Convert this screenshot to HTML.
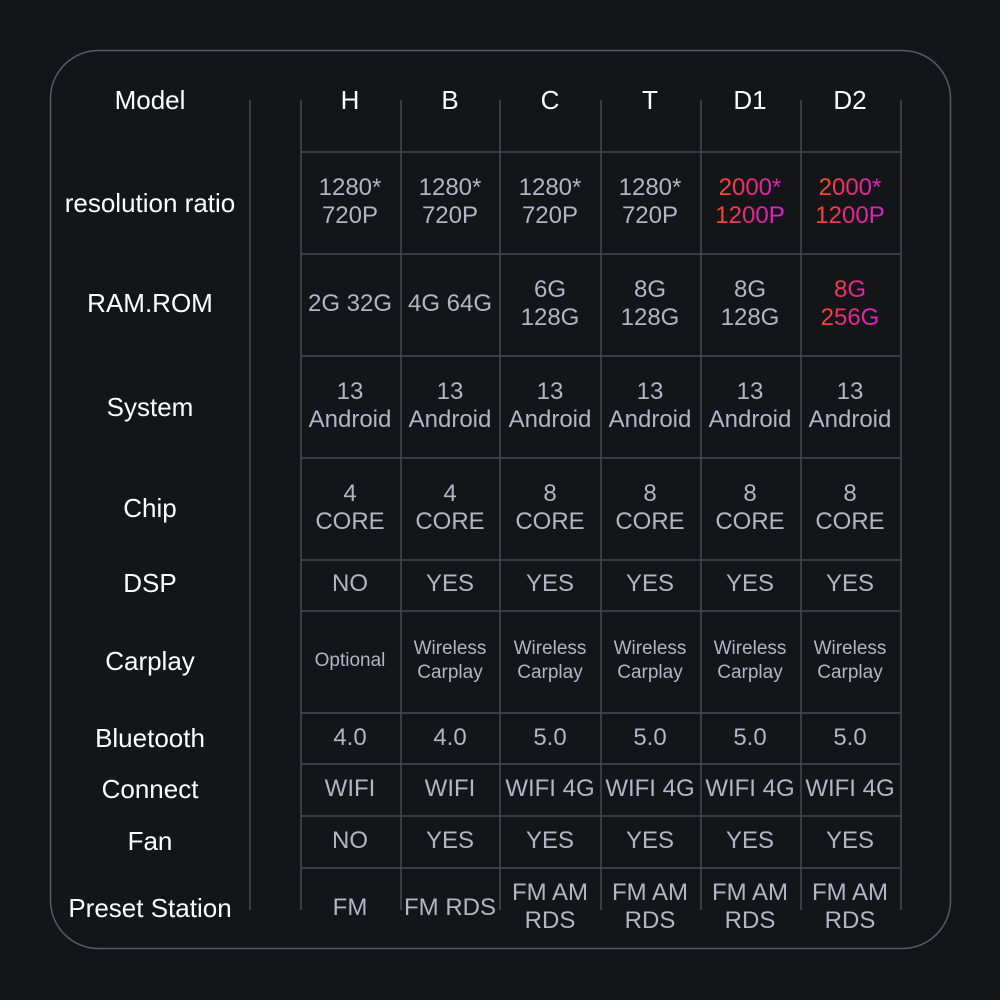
<!DOCTYPE html>
<html><head><meta charset="utf-8"><style>
html,body{margin:0;padding:0;background:#141519;}
#w{position:relative;width:1000px;height:1000px;overflow:hidden;background:#141519;font-family:"Liberation Sans",sans-serif;}
.t{position:absolute;transform:translate(-50%,-50%);text-align:center;white-space:nowrap;color:#b3b4c4;font-size:24px;line-height:28px;}
.h{color:#fff;font-size:26px;}
.s{font-size:19px;line-height:24px;}
.g{background:linear-gradient(100deg,#ff4a25 10%,#e82a80 50%,#dc1fd8 95%);-webkit-background-clip:text;background-clip:text;color:transparent;}
</style></head><body><div id="w">
<svg width="1000" height="1000" style="position:absolute;left:0;top:0">
<rect x="50.5" y="50.5" width="900" height="898" rx="48" fill="none" stroke="#565a68" stroke-width="1.5"/>
<g stroke="#464a58" stroke-width="1.5">
<line x1="250" y1="100" x2="250" y2="910"/>
<line x1="301" y1="100" x2="301" y2="910"/>
<line x1="401" y1="100" x2="401" y2="910"/>
<line x1="500" y1="100" x2="500" y2="910"/>
<line x1="601" y1="100" x2="601" y2="910"/>
<line x1="701" y1="100" x2="701" y2="910"/>
<line x1="801" y1="100" x2="801" y2="910"/>
<line x1="901" y1="100" x2="901" y2="910"/>
<line x1="301" y1="152" x2="901" y2="152"/>
<line x1="301" y1="254" x2="901" y2="254"/>
<line x1="301" y1="356" x2="901" y2="356"/>
<line x1="301" y1="458" x2="901" y2="458"/>
<line x1="301" y1="560" x2="901" y2="560"/>
<line x1="301" y1="611" x2="901" y2="611"/>
<line x1="301" y1="713" x2="901" y2="713"/>
<line x1="301" y1="764" x2="901" y2="764"/>
<line x1="301" y1="816" x2="901" y2="816"/>
<line x1="301" y1="868" x2="901" y2="868"/>
</g></svg>

<div class="t h" style="left:150px;top:100px">Model</div>
<div class="t h" style="left:150px;top:203px">resolution ratio</div>
<div class="t h" style="left:150px;top:303px">RAM.ROM</div>
<div class="t h" style="left:150px;top:407px">System</div>
<div class="t h" style="left:150px;top:508px">Chip</div>
<div class="t h" style="left:150px;top:583px">DSP</div>
<div class="t h" style="left:150px;top:661px">Carplay</div>
<div class="t h" style="left:150px;top:738px">Bluetooth</div>
<div class="t h" style="left:150px;top:789px">Connect</div>
<div class="t h" style="left:150px;top:841px">Fan</div>
<div class="t h" style="left:150px;top:908px">Preset Station</div>

<div class="t h" style="left:350px;top:100px">H</div>
<div class="t h" style="left:450px;top:100px">B</div>
<div class="t h" style="left:550px;top:100px">C</div>
<div class="t h" style="left:650px;top:100px">T</div>
<div class="t h" style="left:750px;top:100px">D1</div>
<div class="t h" style="left:850px;top:100px">D2</div>

<div class="t" style="left:350px;top:202px">1280*<br>720P</div>
<div class="t" style="left:450px;top:202px">1280*<br>720P</div>
<div class="t" style="left:550px;top:202px">1280*<br>720P</div>
<div class="t" style="left:650px;top:202px">1280*<br>720P</div>
<div class="t g" style="left:750px;top:202px">2000*<br>1200P</div>
<div class="t g" style="left:850px;top:202px">2000*<br>1200P</div>

<div class="t" style="left:350px;top:304px">2G 32G</div>
<div class="t" style="left:450px;top:304px">4G 64G</div>
<div class="t" style="left:550px;top:304px">6G<br>128G</div>
<div class="t" style="left:650px;top:304px">8G<br>128G</div>
<div class="t" style="left:750px;top:304px">8G<br>128G</div>
<div class="t g" style="left:850px;top:304px">8G<br>256G</div>

<div class="t" style="left:350px;top:406px">13<br>Android</div>
<div class="t" style="left:450px;top:406px">13<br>Android</div>
<div class="t" style="left:550px;top:406px">13<br>Android</div>
<div class="t" style="left:650px;top:406px">13<br>Android</div>
<div class="t" style="left:750px;top:406px">13<br>Android</div>
<div class="t" style="left:850px;top:406px">13<br>Android</div>

<div class="t" style="left:350px;top:508px">4<br>CORE</div>
<div class="t" style="left:450px;top:508px">4<br>CORE</div>
<div class="t" style="left:550px;top:508px">8<br>CORE</div>
<div class="t" style="left:650px;top:508px">8<br>CORE</div>
<div class="t" style="left:750px;top:508px">8<br>CORE</div>
<div class="t" style="left:850px;top:508px">8<br>CORE</div>

<div class="t" style="left:350px;top:584px">NO</div>
<div class="t" style="left:450px;top:584px">YES</div>
<div class="t" style="left:550px;top:584px">YES</div>
<div class="t" style="left:650px;top:584px">YES</div>
<div class="t" style="left:750px;top:584px">YES</div>
<div class="t" style="left:850px;top:584px">YES</div>

<div class="t s" style="left:350px;top:661px">Optional</div>
<div class="t s" style="left:450px;top:661px">Wireless<br>Carplay</div>
<div class="t s" style="left:550px;top:661px">Wireless<br>Carplay</div>
<div class="t s" style="left:650px;top:661px">Wireless<br>Carplay</div>
<div class="t s" style="left:750px;top:661px">Wireless<br>Carplay</div>
<div class="t s" style="left:850px;top:661px">Wireless<br>Carplay</div>

<div class="t" style="left:350px;top:738px">4.0</div>
<div class="t" style="left:450px;top:738px">4.0</div>
<div class="t" style="left:550px;top:738px">5.0</div>
<div class="t" style="left:650px;top:738px">5.0</div>
<div class="t" style="left:750px;top:738px">5.0</div>
<div class="t" style="left:850px;top:738px">5.0</div>

<div class="t" style="left:350px;top:789px">WIFI</div>
<div class="t" style="left:450px;top:789px">WIFI</div>
<div class="t" style="left:550px;top:789px">WIFI 4G</div>
<div class="t" style="left:650px;top:789px">WIFI 4G</div>
<div class="t" style="left:750px;top:789px">WIFI 4G</div>
<div class="t" style="left:850px;top:789px">WIFI 4G</div>

<div class="t" style="left:350px;top:841px">NO</div>
<div class="t" style="left:450px;top:841px">YES</div>
<div class="t" style="left:550px;top:841px">YES</div>
<div class="t" style="left:650px;top:841px">YES</div>
<div class="t" style="left:750px;top:841px">YES</div>
<div class="t" style="left:850px;top:841px">YES</div>

<div class="t" style="left:350px;top:908px">FM</div>
<div class="t" style="left:450px;top:908px">FM RDS</div>
<div class="t" style="left:550px;top:907px">FM AM<br>RDS</div>
<div class="t" style="left:650px;top:907px">FM AM<br>RDS</div>
<div class="t" style="left:750px;top:907px">FM AM<br>RDS</div>
<div class="t" style="left:850px;top:907px">FM AM<br>RDS</div>
</div></body></html>
